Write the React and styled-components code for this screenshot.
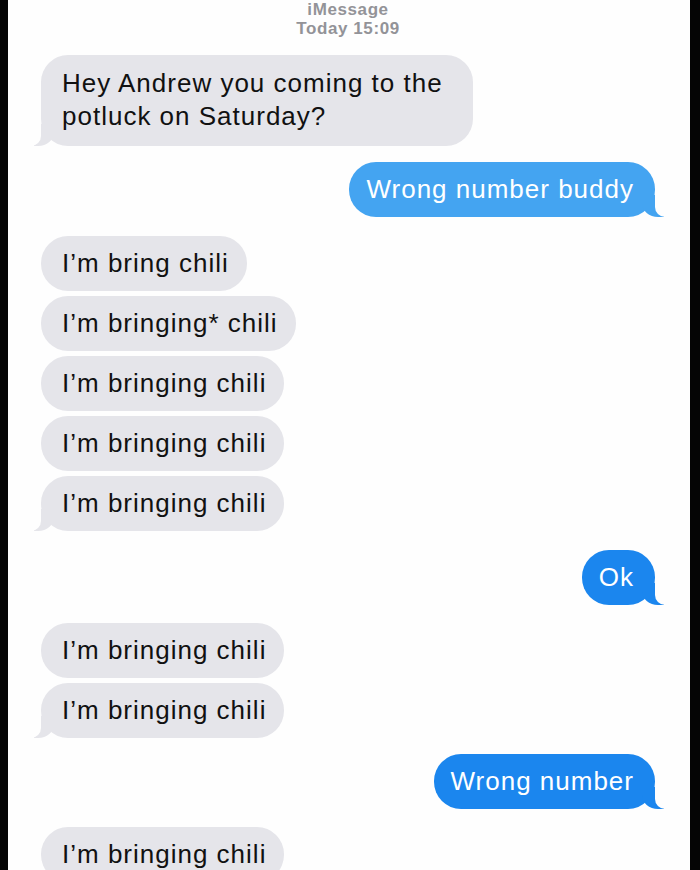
import styled, { createGlobalStyle, css } from "styled-components"

const PAGE = "#fefefe"

const GlobalStyle = createGlobalStyle`
  html, body {
    margin: 0;
    padding: 0;
    overflow: hidden;
    background: #050505;
  }
  body {
    font-family: "Liberation Sans", Arial, sans-serif;
  }
`

const messages = [
  { me: false, gap: 17, tail: true, text: "Hey Andrew you coming to the potluck on Saturday?" },
  { me: true, gap: 16, tail: true, text: "Wrong number buddy", color: "#44a4f1" },
  { me: false, gap: 19, text: "I’m bring chili" },
  { me: false, gap: 5, text: "I’m bringing* chili" },
  { me: false, gap: 5, text: "I’m bringing chili" },
  { me: false, gap: 5, text: "I’m bringing chili" },
  { me: false, gap: 5, tail: true, text: "I’m bringing chili" },
  { me: true, gap: 19, tail: true, text: "Ok" },
  { me: false, gap: 18, text: "I’m bringing chili" },
  { me: false, gap: 5, tail: true, text: "I’m bringing chili" },
  { me: true, gap: 16, tail: true, text: "Wrong number" },
  { me: false, gap: 18, text: "I’m bringing chili" },
]

const App = () => {

  return (

    <>
      <GlobalStyle />

      <Screen>

        <Header>
          <div>iMessage</div>
          <div>Today 15:09</div>
        </Header>

        {messages.map((m, i) => (
          <Bubble key={i} $me={m.me} $gap={m.gap} $tail={m.tail} $color={m.color} $lines={m.text.length > 30 ? 2 : 1}>
            {m.text}
          </Bubble>
        ))}

      </Screen>
    </>

  )

}

const Screen = styled.div`
  width: 682px;
  height: 870px;
  margin-left: 8px;
  background: ${PAGE};
  padding: 0 35px 0 33px;
  box-sizing: border-box;
  display: flex;
  flex-direction: column;
  overflow: hidden;
`

const Header = styled.div`
  text-align: center;
  color: #939398;
  font-size: 17px;
  font-weight: bold;
  line-height: 19px;
  letter-spacing: 0.6px;
`

const themTail = css`
  &::before, &::after {
    content: "";
    position: absolute;
    bottom: 0;
    height: 22px;
  }
  &::before {
    left: -7px;
    width: 20px;
    background: inherit;
    border-bottom-right-radius: 16px 14px;
  }
  &::after {
    left: -26px;
    width: 26px;
    background: ${PAGE};
    border-bottom-right-radius: 10px;
  }
`

const meTail = css`
  &::before, &::after {
    content: "";
    position: absolute;
    bottom: 0;
    height: 22px;
  }
  &::before {
    right: -9px;
    width: 22px;
    background: inherit;
    border-bottom-left-radius: 16px 14px;
  }
  &::after {
    right: -26px;
    width: 26px;
    background: ${PAGE};
    border-bottom-left-radius: 10px;
  }
`

const Bubble = styled.div`
  position: relative;
  box-sizing: border-box;
  align-self: ${p => p.$me ? "flex-end" : "flex-start"};
  flex-shrink: 0;
  max-width: 432px;
  margin-top: ${p => p.$gap}px;
  padding: ${p => p.$me ? "11px 21px 11px 17px" : "11px 18px 11px 21px"};
  padding-top: ${p => p.$lines > 1 ? "12px" : "11px"};
  padding-bottom: ${p => p.$lines > 1 ? "13px" : "11px"};
  border-radius: 27px;
  background: ${p => p.$me ? (p.$color || "#1b86ee") : "#e5e5ea"};
  color: ${p => p.$me ? "#fff" : "#111"};
  font-size: 26px;
  line-height: 33px;
  letter-spacing: 1px;
  white-space: pre-wrap;

  ${p => p.$tail && (p.$me ? meTail : themTail)}
`

export default App
